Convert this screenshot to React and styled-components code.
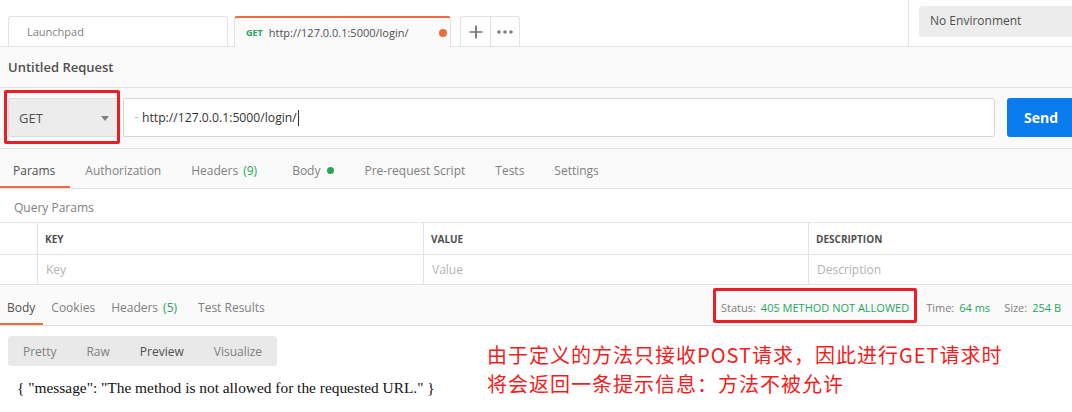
import React from 'react'
import styled, { createGlobalStyle } from 'styled-components'

const GlobalStyle = createGlobalStyle`
  html, body {
    margin: 0;
    padding: 0;
    background: #fff;
  }
  body {
    width: 1072px;
    height: 412px;
    overflow: hidden;
    font-family: "Open Sans", "Noto Sans", sans-serif;
    color: #505050;
  }
  * { box-sizing: border-box; }
`

const requestTabs = [
  { label: 'Params', active: true },
  { label: 'Authorization' },
  { label: 'Headers', count: '(9)' },
  { label: 'Body', dot: true },
  { label: 'Pre-request Script' },
  { label: 'Tests' },
  { label: 'Settings' }
]

const responseTabs = [
  { label: 'Body', active: true },
  { label: 'Cookies' },
  { label: 'Headers', count: '(5)' },
  { label: 'Test Results' }
]

const viewModes = [
  { label: 'Pretty' },
  { label: 'Raw' },
  { label: 'Preview', active: true },
  { label: 'Visualize' }
]

const noteLines = [
  '由于定义的方法只接收POST请求，因此进行GET请求时',
  '将会返回一条提示信息：方法不被允许'
]

const PlusIcon = () => (
  <svg width="14" height="14" viewBox="0 0 14 14">
    <path d="M7 0.5v13M0.5 7h13" stroke="#707070" strokeWidth="1.7" fill="none" />
  </svg>
)

const DotsIcon = () => (
  <svg width="16" height="4" viewBox="0 0 16 4">
    <circle cx="2" cy="2" r="1.8" fill="#808080" />
    <circle cx="8" cy="2" r="1.8" fill="#808080" />
    <circle cx="14" cy="2" r="1.8" fill="#808080" />
  </svg>
)

export default function App() {
  return (
    <>
      <GlobalStyle />
      <Page>
        <TopBar>
          <TabStrip>
            <Tab>
              <TabTitle>Launchpad</TabTitle>
            </Tab>
            <Tab active>
              <Method>GET</Method>
              <TabTitle dark>http://127.0.0.1:5000/login/</TabTitle>
              <UnsavedDot />
            </Tab>
            <TabTools>
              <ToolButton><PlusIcon /></ToolButton>
              <ToolButton><DotsIcon /></ToolButton>
            </TabTools>
          </TabStrip>
          <EnvArea>
            <EnvSelect>No Environment</EnvSelect>
          </EnvArea>
        </TopBar>

        <TitleRow>Untitled Request</TitleRow>

        <UrlRow>
          <MethodSelect>
            GET
            <Caret />
            <Mark />
          </MethodSelect>
          <UrlInput>
            <Cursor />
            http://127.0.0.1:5000/login/
            <TextCaret />
          </UrlInput>
          <SendButton>Send</SendButton>
        </UrlRow>

        <RequestTabs>
          {requestTabs.map((t) => (
            <RequestTab key={t.label} active={t.active}>
              {t.label}
              {t.count && <Count>{t.count}</Count>}
              {t.dot && <GreenDot />}
            </RequestTab>
          ))}
        </RequestTabs>

        <SectionLabel>Query Params</SectionLabel>
        <ParamTable>
          <HeadCell />
          <HeadCell>KEY</HeadCell>
          <HeadCell>VALUE</HeadCell>
          <HeadCell>DESCRIPTION</HeadCell>
          <BodyCell />
          <BodyCell>Key</BodyCell>
          <BodyCell>Value</BodyCell>
          <BodyCell>Description</BodyCell>
        </ParamTable>

        <ResponseBar>
          <ResponseTabs>
            {responseTabs.map((t) => (
              <ResponseTab key={t.label} active={t.active}>
                {t.label}
                {t.count && <Count>{t.count}</Count>}
              </ResponseTab>
            ))}
          </ResponseTabs>
          <Meta>
            <MetaItem marked>
              Status:<MetaValue>405 METHOD NOT ALLOWED</MetaValue>
            </MetaItem>
            <MetaItem>
              Time:<MetaValue>64 ms</MetaValue>
            </MetaItem>
            <MetaItem wide>
              Size:<MetaValue>254 B</MetaValue>
            </MetaItem>
          </Meta>
        </ResponseBar>

        <ResponseBody>
          <ResponseMain>
            <ViewModes>
              {viewModes.map((m) => (
                <ViewMode key={m.label} active={m.active}>{m.label}</ViewMode>
              ))}
            </ViewModes>
            <Preview>{'{ "message": "The method is not allowed for the requested URL." }'}</Preview>
          </ResponseMain>
          <Note>
            {noteLines.map((line) => (
              <NoteLine key={line}>{line}</NoteLine>
            ))}
          </Note>
        </ResponseBody>
      </Page>
    </>
  )
}

/**
 * styling
 */

const Page = styled.div`
  width: 1072px;
  height: 412px;
  overflow: hidden;
  background: #fff;
`

const TopBar = styled.div`
  display: flex;
  height: 47px;
  background: #fff;
  border-bottom: 1px solid #e3e3e3;
`

const TabStrip = styled.div`
  flex: 1;
  display: flex;
  align-items: flex-end;
  padding-left: 8px;
`

const Tab = styled.div`
  display: flex;
  align-items: center;
  width: ${(p) => (p.active ? '217px' : '220px')};
  height: ${(p) => (p.active ? '31px' : '30px')};
  margin-bottom: ${(p) => (p.active ? '-1px' : '0')};
  margin-left: ${(p) => (p.active ? '6px' : '0')};
  padding: 0 ${(p) => (p.active ? '3px 0 11px' : '18px')};
  background: ${(p) => (p.active ? '#fafafa' : '#fff')};
  border: 1px solid #e3e3e3;
  border-bottom: none;
  border-top: ${(p) => (p.active ? '2px solid #f26b3a' : '1px solid #e3e3e3')};
  border-radius: 3px 3px 0 0;
`

const TabTitle = styled.span`
  font-size: 11px;
  color: ${(p) => (p.dark ? '#505050' : '#808080')};
  white-space: nowrap;
`

const Method = styled.span`
  font-size: 9px;
  font-weight: 700;
  color: #26a65b;
  margin-right: 6px;
`

const UnsavedDot = styled.span`
  width: 8px;
  height: 8px;
  border-radius: 50%;
  background: #f26b3a;
  margin-left: auto;
`

const TabTools = styled.div`
  display: flex;
  margin-left: 9px;
  height: 30px;
  border: 1px solid #e3e3e3;
  border-bottom: none;
  border-radius: 3px 3px 0 0;
`

const ToolButton = styled.div`
  display: flex;
  align-items: center;
  justify-content: center;
  width: 29px;
  & + & {
    border-left: 1px solid #e3e3e3;
  }
`

const EnvArea = styled.div`
  width: 164px;
  border-left: 1px solid #e3e3e3;
  padding: 6px 0 0 10px;
`

const EnvSelect = styled.div`
  height: 31px;
  line-height: 30px;
  padding-left: 11px;
  background: #ececec;
  border-radius: 3px 0 0 3px;
  font-size: 12px;
  color: #505050;
`

const TitleRow = styled.div`
  height: 41px;
  display: flex;
  align-items: center;
  padding-left: 8px;
  background: #fafafa;
  border-bottom: 1px solid #e3e3e3;
  font-size: 13px;
  font-weight: 600;
  color: #505050;
`

const UrlRow = styled.div`
  display: flex;
  height: 61px;
  padding: 10px 0 0 8px;
  background: #fafafa;
  border-bottom: 1px solid #e3e3e3;
`

const MethodSelect = styled.div`
  position: relative;
  display: flex;
  align-items: center;
  width: 110px;
  height: 39px;
  padding-left: 10px;
  background: #ececec;
  border: 1px solid #dcdcdc;
  border-radius: 3px 0 0 3px;
  font-size: 13px;
  color: #505050;
`

const Caret = styled.span`
  position: absolute;
  right: 8px;
  top: 17px;
  border-left: 4px solid transparent;
  border-right: 4px solid transparent;
  border-top: 5px solid #808080;
`

const Mark = styled.span`
  position: absolute;
  top: -9px;
  bottom: -8px;
  left: -5px;
  right: -3px;
  border: 3px solid #ee1c25;
  border-radius: 2px;
  pointer-events: none;
`

const UrlInput = styled.div`
  flex: 1;
  display: flex;
  align-items: center;
  height: 39px;
  margin-left: 5px;
  padding-left: 11px;
  background: #fff;
  border: 1px solid #d6d6d6;
  border-radius: 0 3px 3px 0;
  font-size: 12.2px;
  color: #333;
`

const Cursor = styled.span`
  width: 3px;
  height: 1px;
  background: #bbb;
  margin-right: 4px;
`

const TextCaret = styled.span`
  width: 1px;
  height: 16px;
  background: #333;
  margin-left: 1px;
`

const SendButton = styled.div`
  width: 65px;
  height: 39px;
  margin-left: 12px;
  padding-left: 17px;
  line-height: 39px;
  background: #097bed;
  border-radius: 3px 0 0 3px;
  color: #fff;
  font-size: 14px;
  font-weight: 700;
`

const RequestTabs = styled.div`
  display: flex;
  height: 40px;
  background: #fafafa;
  border-bottom: 1px solid #e3e3e3;
`

const RequestTab = styled.div`
  display: flex;
  align-items: center;
  padding: 6px 15px 0;
  font-size: 12px;
  color: ${(p) => (p.active ? '#505050' : '#808080')};
  border-bottom: 2px solid ${(p) => (p.active ? '#f26b3a' : 'transparent')};
  &:first-child {
    padding-left: 13px;
  }
`

const Count = styled.span`
  color: #26a65b;
  margin: 0 5px;
`

const GreenDot = styled.span`
  width: 7px;
  height: 7px;
  border-radius: 50%;
  background: #26a65b;
  margin-left: 7px;
`

const SectionLabel = styled.div`
  height: 33px;
  display: flex;
  align-items: center;
  padding: 3px 0 0 14px;
  font-size: 12px;
  color: #808080;
`

const ParamTable = styled.div`
  display: grid;
  grid-template-columns: 37px 386px 385px 1fr;
  grid-template-rows: 32px 29px;
  border-top: 1px solid #e3e3e3;
  border-bottom: 1px solid #e3e3e3;
`

const HeadCell = styled.div`
  display: flex;
  align-items: center;
  padding-left: 7px;
  font-size: 10px;
  font-weight: 700;
  color: #505050;
  border-bottom: 1px solid #e3e3e3;
  & + & {
    border-left: 1px solid #e3e3e3;
  }
`

const BodyCell = styled.div`
  display: flex;
  align-items: center;
  padding-left: 8px;
  font-size: 12px;
  color: #b3b3b3;
  & + & {
    border-left: 1px solid #e3e3e3;
  }
`

const ResponseBar = styled.div`
  display: flex;
  align-items: stretch;
  justify-content: space-between;
  height: 40px;
  margin-top: 1px;
  background: #fafafa;
  border-bottom: 1px solid #e3e3e3;
`

const ResponseTabs = styled.div`
  display: flex;
`

const ResponseTab = styled.div`
  display: flex;
  align-items: center;
  padding: 5px 8px 0;
  font-size: 12px;
  color: ${(p) => (p.active ? '#505050' : '#808080')};
  border-bottom: 2px solid ${(p) => (p.active ? '#f26b3a' : 'transparent')};
  &:first-child {
    padding-left: 7px;
  }
`

const Meta = styled.div`
  display: flex;
  align-items: flex-start;
  padding: 2px 11px 0 0;
`

const MetaItem = styled.div`
  display: flex;
  align-items: center;
  height: 35px;
  margin-left: ${(p) => (p.marked ? '0' : p.wide ? '14px' : '9px')};
  padding: 3px ${(p) => (p.marked ? '5px' : '0')} 0;
  font-size: 11px;
  color: #808080;
  border: ${(p) => (p.marked ? '3px solid #ee1c25' : 'none')};
  border-radius: 2px;
`

const MetaValue = styled.span`
  color: #26a65b;
  margin-left: 5px;
`

const ResponseBody = styled.div`
  display: flex;
`

const ResponseMain = styled.div`
  width: 487px;
  padding: 10px 0 0 8px;
`

const ViewModes = styled.div`
  display: flex;
  align-items: center;
  gap: 30px;
  width: 269px;
  height: 30px;
  padding: 0 15px;
  background: #e9e9e9;
  border-radius: 3px;
`

const ViewMode = styled.span`
  font-size: 12px;
  color: ${(p) => (p.active ? '#505050' : '#808080')};
`

const Preview = styled.div`
  padding: 13px 0 0 9px;
  font-family: "Liberation Serif", "Times New Roman", serif;
  font-size: 15.4px;
  color: #111;
  white-space: nowrap;
`

const Note = styled.div`
  padding-top: 14px;
  font-family: "Noto Sans CJK SC", "Noto Sans", sans-serif;
  color: #f41c1c;
  white-space: nowrap;
`

const NoteLine = styled.div`
  height: 29px;
  font-size: 20px;
  line-height: 29px;
  letter-spacing: 1px;
`
